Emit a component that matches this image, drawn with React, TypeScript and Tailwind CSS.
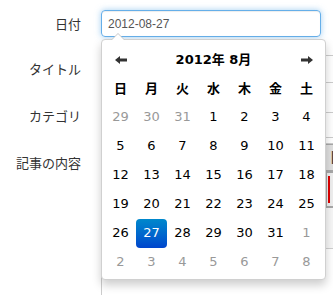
import React from 'react'

const weeks: number[][] = [
  [29, 30, 31, 1, 2, 3, 4],
  [5, 6, 7, 8, 9, 10, 11],
  [12, 13, 14, 15, 16, 17, 18],
  [19, 20, 21, 22, 23, 24, 25],
  [26, 27, 28, 29, 30, 31, 1],
  [2, 3, 4, 5, 6, 7, 8],
]

const dow = ['日', '月', '火', '水', '木', '金', '土']

function Arrow({ dir }: { dir: 'l' | 'r' }) {
  return (
    <svg width="12" height="8" viewBox="0 0 12 8" className={dir === 'r' ? 'rotate-180' : ''}>
      <path d="M0 4 L5 0 V2.5 H12 V5.5 H5 V8 Z" fill="#333" />
    </svg>
  )
}

function Calendar() {
  const muted = (w: number, d: number) => (w === 0 && d > 20) || (w >= 4 && d < 15)
  return (
    <div className="absolute left-[101px] top-[39px] z-10 rounded-[4px] border border-[#d0d0d0] bg-white px-[3px] pt-[5px] pb-[2px] shadow-[0_5px_10px_rgba(0,0,0,0.2)] [font-family:'DejaVu_Sans','Noto_Sans_CJK_JP',sans-serif] text-[13px] text-black">
      <div className="absolute -top-[7px] left-[9px] h-0 w-0 border-x-[7px] border-b-[7px] border-x-transparent border-b-[#c8c8c8]" />
      <div className="absolute -top-[6px] left-[10px] h-0 w-0 border-x-[6px] border-b-[6px] border-x-transparent border-b-white" />
      <div className="grid grid-cols-[31px_155px_31px] h-[29px] items-center">
        <div className="flex justify-center"><Arrow dir="l" /></div>
        <div className="text-center font-bold">2012年 8月</div>
        <div className="flex justify-center"><Arrow dir="r" /></div>
      </div>
      <div className="grid grid-cols-[repeat(7,31px)]">
        {dow.map(d => (
          <div key={d} className="flex h-[29px] items-center justify-center font-bold">{d}</div>
        ))}
        {weeks.map((w, wi) =>
          w.map((d, di) => {
            const sel = wi === 4 && d === 27
            return (
              <div
                key={wi + '-' + di}
                className={
                  'flex h-[29px] items-center justify-center pb-[2px] ' +
                  (sel
                    ? 'rounded-[4px] bg-linear-to-b from-[#0088cc] to-[#0044cc] text-white'
                    : muted(wi, d)
                      ? 'text-[#999]'
                      : '')
                }
              >
                {d}
              </div>
            )
          })
        )}
      </div>
    </div>
  )
}

export default function App() {
  return (
    <div className="relative h-[295px] w-[333px] overflow-hidden bg-white text-[13px] text-[#333] [font-family:'Noto_Sans_CJK_JP',sans-serif]">
      <div className="flex flex-col pt-[10px]">
        <div className="flex h-[27px] items-center">
          <div className="w-[81px] shrink-0 text-right">日付</div>
          <div className="ml-[20px] flex h-[27px] w-[220px] shrink-0 items-center rounded-[4px] border border-[#66afe9] px-[6px] text-[12px] text-[#555] shadow-[inset_0_1px_1px_rgba(0,0,0,0.075),0_0_6px_rgba(102,175,233,0.6)] [font-family:'Liberation_Sans',sans-serif]">
            2012-08-27
          </div>
        </div>
        <div className="mt-[18px] flex h-[28px] items-center">
          <div className="w-[81px] shrink-0 text-right">タイトル</div>
          <div className="ml-[20px] h-[28px] w-[280px] shrink-0 rounded-[4px] border border-[#ccc]" />
        </div>
        <div className="mt-[20px] flex items-start">
          <div className="flex h-[26px] w-[81px] shrink-0 items-center justify-end">カテゴリ</div>
          <div className="ml-[20px] mt-[9px] h-[26px] w-[280px] shrink-0 rounded-[4px] border border-[#ccc]" />
        </div>
        <div className="mt-[5px] flex items-start">
          <div className="flex h-[40px] w-[81px] shrink-0 items-center justify-end whitespace-nowrap">記事の内容</div>
          <div className="ml-[20px] flex h-[200px] w-[280px] shrink-0 flex-col border border-[#ccc] bg-[#f7f7f7]">
            <div className="flex h-[27px] pl-[222px]">
              <div className="flex h-[27px] w-[26px] items-center justify-center border border-[#a8a8a8] bg-[#e0e0e0] text-[18px] font-bold text-[#444] [font-family:'DejaVu_Sans',sans-serif]">
                B
              </div>
            </div>
            <div className="flex h-[37px] pl-[223px]">
              <div className="flex h-[37px] w-[24px] items-center border-2 border-[#a8a8a8] bg-[#efefef] pl-[1px]">
                <div className="h-[27px] w-[2px] bg-[#e00000]" />
              </div>
            </div>
            <div className="h-[41px] border-b border-[#d0d0d0]" />
            <div className="flex-1 bg-white" />
          </div>
        </div>
      </div>
      <Calendar />
    </div>
  )
}
